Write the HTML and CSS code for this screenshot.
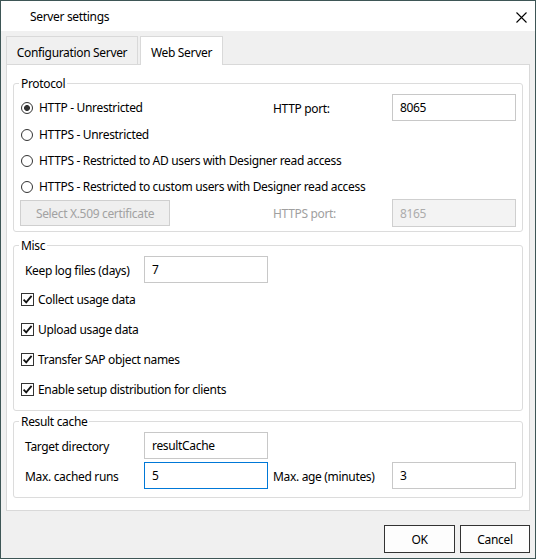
FILE: index.html
```html
<!DOCTYPE html>
<html>
<head>
<meta charset="utf-8">
<link rel="stylesheet" href="styles.css">
</head>
<body>
<div class="window">
  <div class="titlebar">
    <span class="title">Server settings</span>
    <span class="close"><svg width="11" height="11" viewBox="0 0 11 11"><path d="M0.5 0.5 L10.5 10.5 M10.5 0.5 L0.5 10.5" stroke="#000" stroke-width="1.1" fill="none"/></svg></span>
  </div>
  <div class="body">
    <div class="tabs">
      <div class="tab tab-config">Configuration Server</div>
      <div class="tab tab-web active">Web Server</div>
    </div>
    <div class="panel">
      <fieldset class="group protocol">
        <legend>Protocol</legend>
        <div class="pgrid">
          <label class="opt"><span class="radio checked"></span>HTTP - Unrestricted</label>
          <span class="lbl">HTTP port:</span>
          <input class="field" type="text" value="8065">
          <label class="opt full"><span class="radio"></span>HTTPS - Unrestricted</label>
          <label class="opt full"><span class="radio"></span>HTTPS - Restricted to AD users with Designer read access</label>
          <label class="opt full"><span class="radio"></span>HTTPS - Restricted to custom users with Designer read access</label>
          <button class="cert" disabled>Select X.509 certificate</button>
          <span class="lbl dis">HTTPS port:</span>
          <input class="field disabled tall" type="text" value="8165" disabled>
        </div>
      </fieldset>
      <fieldset class="group misc">
        <legend>Misc</legend>
        <div class="mbox">
          <div class="keeprow">
            <span class="lbl">Keep log files (days)</span>
            <input class="field" type="text" value="7">
          </div>
          <label class="chk"><span class="check"><svg width="11" height="11" viewBox="0 0 11 11"><path d="M1.6 5.6 L4.2 8.3 L9.6 1.8" stroke="#111" stroke-width="1.8" fill="none"/></svg></span>Collect usage data</label>
          <label class="chk"><span class="check"><svg width="11" height="11" viewBox="0 0 11 11"><path d="M1.6 5.6 L4.2 8.3 L9.6 1.8" stroke="#111" stroke-width="1.8" fill="none"/></svg></span>Upload usage data</label>
          <label class="chk"><span class="check"><svg width="11" height="11" viewBox="0 0 11 11"><path d="M1.6 5.6 L4.2 8.3 L9.6 1.8" stroke="#111" stroke-width="1.8" fill="none"/></svg></span>Transfer SAP object names</label>
          <label class="chk"><span class="check"><svg width="11" height="11" viewBox="0 0 11 11"><path d="M1.6 5.6 L4.2 8.3 L9.6 1.8" stroke="#111" stroke-width="1.8" fill="none"/></svg></span>Enable setup distribution for clients</label>
        </div>
      </fieldset>
      <fieldset class="group cache">
        <legend>Result cache</legend>
        <div class="rgrid">
          <span class="lbl">Target directory</span>
          <input class="field" type="text" value="resultCache">
          <span></span><span></span><span></span>
          <span class="lbl">Max. cached runs</span>
          <input class="field focus" type="text" value="5">
          <span></span>
          <span class="lbl">Max. age (minutes)</span>
          <input class="field" type="text" value="3">
        </div>
      </fieldset>
    </div>
    <div class="footer">
      <button class="btn ok">OK</button>
      <button class="btn cancel">Cancel</button>
    </div>
  </div>
</div>
</body>
</html>
```
FILE: styles.css
```css
* { box-sizing: border-box; }
html, body { margin: 0; padding: 0; }
body {
  font-family: "Noto Sans", "Open Sans", sans-serif;
  font-size: 12px;
  letter-spacing: -0.33px;
  color: #000;
  background: #fff;
}
.window {
  width: 536px;
  height: 559px;
  border: 1px solid #3e5656;
  background: #f0f0f0;
  display: flex;
  flex-direction: column;
}
.titlebar {
  height: 30px;
  background: #fff;
  display: flex;
  align-items: center;
  justify-content: space-between;
  padding-left: 29px;
  flex: none;
}
.title { font-size: 12px; padding-top: 1px; }
.close {
  width: 28px;
  height: 30px;
  display: flex;
  align-items: center;
  justify-content: center;
  padding-top: 2px;
}
.close svg { display: block; }
.body {
  flex: 1;
  padding: 5px 5px 0 5px;
  display: flex;
  flex-direction: column;
}
.tabs {
  display: flex;
  gap: 2px;
  height: 28px;
  align-items: flex-end;
}
.tab {
  height: 28px;
  border: 1px solid #d9d9d9;
  border-bottom: none;
  background: #f0f0f0;
  display: flex;
  align-items: center;
  justify-content: center;
  padding-top: 3px;
  color: #000;
}
.tab-config { width: 132px; }
.tab-web { width: 83px; }
.tab.active {
  background: #fff;
  height: 29px;
  margin-bottom: -1px;
  position: relative;
  z-index: 1;
}
.panel {
  height: 447px;
  background: #fff;
  border: 1px solid #d9d9d9;
  padding: 0 6px;
}
fieldset.group {
  margin: 0;
  padding: 0;
  border: 1px solid #dcdcdc;
  border-radius: 3px;
  min-width: 0;
}
legend {
  margin-left: 5px;
  padding: 0 2px;
  line-height: 15px;
  color: #000;
}
fieldset.group.protocol { margin-top: 11px; }
fieldset.group.misc { margin-top: 6px; }
fieldset.group.cache { margin-top: 3px; }

.pgrid {
  display: grid;
  grid-template-columns: 252px 119px 124px;
  grid-template-rows: 27px 27px 25px 26px 28px;
  padding: 3px 6px 4px 7px;
  align-items: center;
}
.opt {
  display: flex;
  align-items: center;
  gap: 6px;
  white-space: nowrap;
}
.opt.full { grid-column: 1 / 4; }
.radio {
  width: 12px;
  height: 12px;
  border: 1px solid #333;
  border-radius: 50%;
  background: #fff;
  flex: none;
  margin-top: 1px;
}
.radio.checked {
  background: radial-gradient(circle, #333 0 2.6px, #fff 3.3px);
}
.lbl { white-space: nowrap; padding-top: 1px; }
.lbl.dis { color: #a0a0a0; }
.field {
  font: inherit;
  letter-spacing: inherit;
  height: 27px;
  width: 100%;
  border: 1px solid #c8c8c8;
  background: #fff;
  padding: 0 7px;
  color: #000;
  outline: none;
  margin: 0;
}
.field.tall { height: 28px; }
.field.disabled {
  background: #f3f3f3;
  border-color: #cfcfcf;
  color: #acacac;
}
.field.focus { border-color: #0078d7; }
.cert {
  font: inherit;
  letter-spacing: inherit;
  width: 150px;
  height: 26px;
  margin-left: -1px;
  background: #efefef;
  border: 1px solid #cfcfcf;
  color: #a2a2a2;
  padding: 0;
}

.mbox { padding: 3px 6px 6px 7px; }
.keeprow {
  display: grid;
  grid-template-columns: 119px 124px;
  height: 28px;
  margin-left: 4px;
  align-items: start;
}
.keeprow .lbl { line-height: 27px; }
.chk {
  height: 30px;
  display: flex;
  align-items: center;
  gap: 4px;
  white-space: nowrap;
}
.check {
  width: 13px;
  height: 13px;
  border: 1px solid #333;
  background: #fff;
  flex: none;
  display: flex;
  align-items: center;
  justify-content: center;
}
.check svg { display: block; }

.rgrid {
  display: grid;
  grid-template-columns: 119px 124px 5px 119px 124px;
  grid-template-rows: 27px 27px;
  row-gap: 3px;
  padding: 3px 6px 8px 11px;
  align-items: center;
}

.footer {
  margin-top: 14px;
  display: flex;
  justify-content: flex-end;
  gap: 5px;
}
.btn {
  font: inherit;
  letter-spacing: inherit;
  height: 28px;
  background: #fdfdfd;
  border: 1px solid #333;
  color: #000;
  padding: 0;
}
.btn.ok { width: 71px; }
.btn.cancel { width: 70px; }
```
